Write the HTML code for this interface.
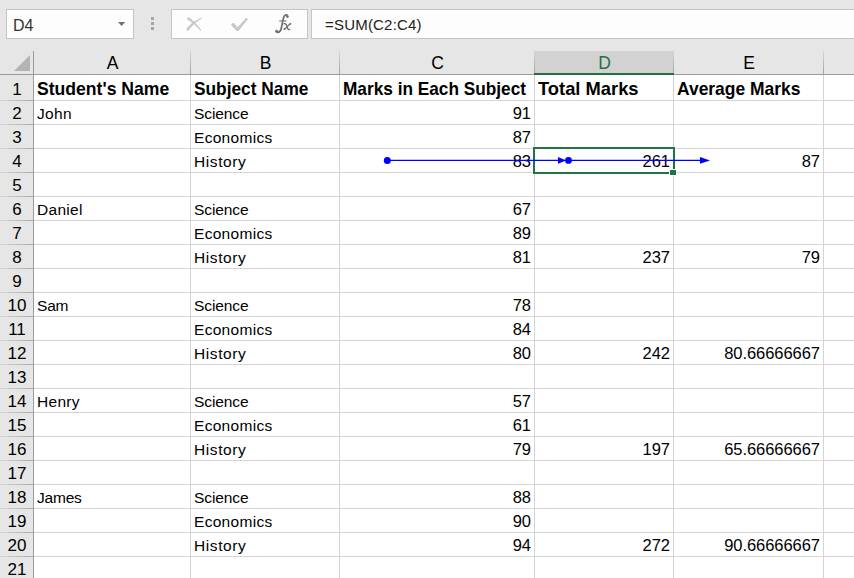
<!DOCTYPE html>
<html><head><meta charset="utf-8"><style>
*{margin:0;padding:0;box-sizing:border-box}
html,body{width:854px;height:578px;overflow:hidden;background:#e6e6e6;font-family:"Liberation Sans",sans-serif}
.abs{position:absolute}
#namebox{position:absolute;left:6px;top:9px;width:128px;height:30px;background:#fdfdfd;border:1px solid #c6c6c6}
#fxbox{position:absolute;left:171px;top:9px;width:137px;height:30px;background:#fdfdfd;border:1px solid #c6c6c6}
#fbox{position:absolute;left:311px;top:9px;width:560px;height:30px;background:#fdfdfd;border:1px solid #c6c6c6}
.ftxt{position:absolute;font-size:15px;line-height:15px;color:#222;white-space:pre;letter-spacing:0.2px}
#sheet{position:absolute;left:0;top:51px;width:854px;height:527px;background:#fff}
#colhdr{position:absolute;left:0;top:51px;width:854px;height:23px;background:#e6e6e6}
#rowhdr{position:absolute;left:0;top:51px;width:33px;height:527px;background:#e6e6e6}
.hl{position:absolute;left:34px;width:820px;height:1px;background:#d4d4d4}
.vl{position:absolute;top:75px;height:503px;width:1px;background:#d4d4d4}
.rh{position:absolute;left:0;width:33px;height:1px;background:linear-gradient(to right,#d6d6d6,#a9a9a9)}
.ch{position:absolute;top:51px;height:23px;width:1px;background:linear-gradient(to bottom,#d6d6d6,#a2a2a2)}
#hline{position:absolute;left:0;top:74px;width:854px;height:1px;background:#9b9b9b}
#vline{position:absolute;left:33px;top:51px;width:1px;height:527px;background:#9b9b9b}
.t{position:absolute;font-size:15.5px;line-height:15.5px;letter-spacing:0.3px;color:#000;white-space:pre}
.t.r{letter-spacing:-0.05px;font-size:16.5px;line-height:16.5px}
.t.b{transform-origin:0 0;letter-spacing:0;font-weight:bold;font-size:18.5px;line-height:18.5px}
.rn{position:absolute;left:0;width:34px;text-align:center;font-size:17px;line-height:17px;color:#000}
.cn{position:absolute;text-align:center;font-size:17.5px;line-height:17.5px;color:#000}
.selhdr{position:absolute;left:534px;top:51px;width:140px;height:24px;background:#d2d2d2;border-bottom:2px solid #217346}
.cn.sel{color:#217346}
</style></head><body>
<div id="namebox"></div>
<div class="ftxt" style="left:13px;top:17.5px;font-size:16px;line-height:16px;color:#333;letter-spacing:0">D4</div>
<svg class="abs" style="left:117px;top:21px" width="10" height="6"><path d="M1 1 L8.2 1 L4.6 5 Z" fill="#707070"/></svg>
<div class="abs" style="left:151px;top:17px;width:3px;height:3px;background:#a6a6a6"></div>
<div class="abs" style="left:151px;top:22px;width:3px;height:3px;background:#a6a6a6"></div>
<div class="abs" style="left:151px;top:27px;width:3px;height:3px;background:#a6a6a6"></div>
<div id="fxbox"></div>
<svg class="abs" style="left:0;top:0" width="320" height="45" fill="#c8c8c8"><path d="M187.85 19.98 L188.43 20.26 L189.04 20.59 L189.67 20.97 L190.34 21.40 L191.03 21.88 L191.75 22.41 L192.49 22.99 L193.25 23.62 L194.04 24.30 L194.85 25.03 L195.68 25.81 L196.54 26.64 L197.42 27.52 L198.32 28.45 L199.24 29.43 L200.18 30.45 L201.02 29.75 L200.15 28.64 L199.29 27.59 L198.45 26.58 L197.64 25.62 L196.84 24.70 L196.06 23.83 L195.29 23.01 L194.55 22.23 L193.82 21.50 L193.11 20.81 L192.42 20.17 L191.74 19.57 L191.07 19.01 L190.42 18.50 L189.78 18.04 L189.15 17.62 Z"/><circle cx="188.5" cy="18.8" r="1.35"/><circle cx="200.6" cy="30.1" r="0.55"/><path d="M188.87 30.12 L189.52 29.22 L190.18 28.35 L190.86 27.51 L191.55 26.69 L192.26 25.91 L192.99 25.15 L193.74 24.42 L194.50 23.71 L195.28 23.04 L196.07 22.39 L196.89 21.77 L197.72 21.18 L198.57 20.62 L199.44 20.09 L200.32 19.58 L201.22 19.10 L200.78 18.10 L199.79 18.50 L198.83 18.94 L197.87 19.40 L196.93 19.91 L196.00 20.44 L195.09 21.01 L194.19 21.60 L193.30 22.24 L192.43 22.90 L191.57 23.60 L190.73 24.33 L189.90 25.10 L189.08 25.89 L188.28 26.72 L187.50 27.58 L186.73 28.48 Z"/><circle cx="187.8" cy="29.3" r="1.35"/><circle cx="201" cy="18.6" r="0.55"/></svg>
<svg class="abs" style="left:0;top:0" width="320" height="45" fill="#c8c8c8"><path d="M231.70 25.70 L231.99 26.02 L232.29 26.34 L232.58 26.66 L232.88 26.98 L233.17 27.30 L233.47 27.61 L233.77 27.92 L234.07 28.23 L234.38 28.54 L234.68 28.85 L234.99 29.16 L235.29 29.46 L235.60 29.76 L235.91 30.06 L236.23 30.36 L236.54 30.66 L238.66 28.54 L238.38 28.24 L238.09 27.93 L237.81 27.62 L237.53 27.31 L237.25 27.00 L236.98 26.69 L236.70 26.38 L236.43 26.07 L236.16 25.75 L235.89 25.43 L235.62 25.12 L235.35 24.80 L235.08 24.47 L234.82 24.15 L234.56 23.83 L234.30 23.50 Z"/><circle cx="233.0" cy="24.6" r="1.7"/><circle cx="237.6" cy="29.6" r="1.5"/><path d="M238.74 30.58 L239.27 29.92 L239.80 29.26 L240.34 28.60 L240.88 27.94 L241.42 27.27 L241.96 26.59 L242.50 25.92 L243.04 25.24 L243.59 24.56 L244.13 23.88 L244.68 23.19 L245.23 22.50 L245.78 21.80 L246.33 21.11 L246.89 20.41 L247.44 19.71 L245.76 18.29 L245.16 18.96 L244.57 19.63 L243.98 20.29 L243.39 20.95 L242.81 21.61 L242.22 22.26 L241.64 22.91 L241.06 23.56 L240.48 24.20 L239.90 24.84 L239.32 25.48 L238.75 26.11 L238.18 26.75 L237.60 27.37 L237.03 28.00 L236.46 28.62 Z"/><circle cx="237.6" cy="29.6" r="1.5"/><circle cx="246.6" cy="19.0" r="1.1"/></svg>
<svg class="abs" style="left:0;top:0" width="320" height="45">
<path d="M287.6 15.6 C286.6 14.2 284.4 14.6 283.6 17.5 L281.2 28.5 C280.6 31.4 279 32.6 276.8 32.2" fill="none" stroke="#6e6e6e" stroke-width="1.7"/>
<circle cx="287.4" cy="16.6" r="1.35" fill="#6e6e6e"/>
<circle cx="276.6" cy="31.3" r="1.5" fill="#6e6e6e"/>
<path d="M279.2 20.9 L286.3 20.9" stroke="#7a7a7a" stroke-width="1.2"/>
<path d="M283.6 23.9 C285.2 23 286.2 24 286.8 26 L287.6 28.6 C288.1 29.8 289.2 29.9 290.2 29.1" fill="none" stroke="#6e6e6e" stroke-width="1.3"/>
<path d="M290.6 23.6 C289.2 24.2 286.5 27.5 284.6 29.3" fill="none" stroke="#6e6e6e" stroke-width="1.3"/>
<circle cx="290.4" cy="23.8" r="0.9" fill="#6e6e6e"/>
<circle cx="284.5" cy="29.0" r="1.0" fill="#6e6e6e"/>
</svg>
<div id="fbox"></div>
<div class="ftxt" style="left:325px;top:17px">=SUM(C2:C4)</div>
<div id="sheet"></div>
<div id="colhdr"></div>
<div id="rowhdr"></div>
<div class="selhdr"></div>
<svg class="abs" style="left:14px;top:55px" width="17" height="17"><path d="M16 0 L16 16 L0 16 Z" fill="#b4b4b4"/></svg>
<div class="hl" style="top:100px"></div><div class="rh" style="top:100px"></div><div class="hl" style="top:124px"></div><div class="rh" style="top:124px"></div><div class="hl" style="top:148px"></div><div class="rh" style="top:148px"></div><div class="hl" style="top:172px"></div><div class="rh" style="top:172px"></div><div class="hl" style="top:196px"></div><div class="rh" style="top:196px"></div><div class="hl" style="top:220px"></div><div class="rh" style="top:220px"></div><div class="hl" style="top:244px"></div><div class="rh" style="top:244px"></div><div class="hl" style="top:268px"></div><div class="rh" style="top:268px"></div><div class="hl" style="top:292px"></div><div class="rh" style="top:292px"></div><div class="hl" style="top:316px"></div><div class="rh" style="top:316px"></div><div class="hl" style="top:340px"></div><div class="rh" style="top:340px"></div><div class="hl" style="top:364px"></div><div class="rh" style="top:364px"></div><div class="hl" style="top:388px"></div><div class="rh" style="top:388px"></div><div class="hl" style="top:412px"></div><div class="rh" style="top:412px"></div><div class="hl" style="top:436px"></div><div class="rh" style="top:436px"></div><div class="hl" style="top:460px"></div><div class="rh" style="top:460px"></div><div class="hl" style="top:484px"></div><div class="rh" style="top:484px"></div><div class="hl" style="top:508px"></div><div class="rh" style="top:508px"></div><div class="hl" style="top:532px"></div><div class="rh" style="top:532px"></div><div class="hl" style="top:556px"></div><div class="rh" style="top:556px"></div><div class="vl" style="left:190px"></div><div class="ch" style="left:190px"></div><div class="vl" style="left:339px"></div><div class="ch" style="left:339px"></div><div class="vl" style="left:534px"></div><div class="ch" style="left:534px"></div><div class="vl" style="left:673px"></div><div class="ch" style="left:673px"></div><div class="vl" style="left:823px"></div><div class="ch" style="left:823px"></div>
<div id="hline"></div>
<div id="vline"></div>
<div class="abs" style="left:534px;top:73px;width:140px;height:2px;background:#217346"></div>
<div class="cn" style="left:34px;width:157px;top:55.19px">A</div><div class="cn" style="left:191px;width:149px;top:55.19px">B</div><div class="cn" style="left:340px;width:195px;top:55.19px">C</div><div class="cn sel" style="left:535px;width:139px;top:55.19px">D</div><div class="cn" style="left:674px;width:150px;top:55.19px">E</div>
<div class="rn" style="top:81.11px">1</div><div class="rn" style="top:105.41px">2</div><div class="rn" style="top:129.41px">3</div><div class="rn" style="top:153.41px">4</div><div class="rn" style="top:177.41px">5</div><div class="rn" style="top:201.41px">6</div><div class="rn" style="top:225.41px">7</div><div class="rn" style="top:249.41px">8</div><div class="rn" style="top:273.41px">9</div><div class="rn" style="top:297.41px">10</div><div class="rn" style="top:321.41px">11</div><div class="rn" style="top:345.41px">12</div><div class="rn" style="top:369.41px">13</div><div class="rn" style="top:393.41px">14</div><div class="rn" style="top:417.41px">15</div><div class="rn" style="top:441.41px">16</div><div class="rn" style="top:465.41px">17</div><div class="rn" style="top:489.41px">18</div><div class="rn" style="top:513.41px">19</div><div class="rn" style="top:537.41px">20</div><div class="rn" style="top:561.41px">21</div>
<div class="t b" style="left:37.00px;top:80.34px;transform:scaleX(0.951)">Student's Name</div><div class="t b" style="left:194.30px;top:80.34px;transform:scaleX(0.935)">Subject Name</div><div class="t b" style="left:342.50px;top:80.34px;transform:scaleX(0.932)">Marks in Each Subject</div><div class="t b" style="left:537.70px;top:80.34px;transform:scaleX(0.991)">Total Marks</div><div class="t b" style="left:677.20px;top:80.34px;transform:scaleX(0.942)">Average Marks</div><div class="t" style="left:37px;top:105.88px">John</div><div class="t" style="left:194px;top:105.88px;letter-spacing:-0.08px">Science</div><div class="t r" style="right:323px;top:105.03px">91</div><div class="t" style="left:194px;top:129.88px">Economics</div><div class="t r" style="right:323px;top:129.03px">87</div><div class="t" style="left:194px;top:153.88px;letter-spacing:0.6px">History</div><div class="t r" style="right:323px;top:153.03px">83</div><div class="t r" style="right:184px;top:153.03px">261</div><div class="t r" style="right:34px;top:153.03px">87</div><div class="t" style="left:37px;top:201.88px">Daniel</div><div class="t" style="left:194px;top:201.88px;letter-spacing:-0.08px">Science</div><div class="t r" style="right:323px;top:201.03px">67</div><div class="t" style="left:194px;top:225.88px">Economics</div><div class="t r" style="right:323px;top:225.03px">89</div><div class="t" style="left:194px;top:249.88px;letter-spacing:0.6px">History</div><div class="t r" style="right:323px;top:249.03px">81</div><div class="t r" style="right:184px;top:249.03px">237</div><div class="t r" style="right:34px;top:249.03px">79</div><div class="t" style="left:37px;top:297.88px;letter-spacing:-0.2px">Sam</div><div class="t" style="left:194px;top:297.88px;letter-spacing:-0.08px">Science</div><div class="t r" style="right:323px;top:297.03px">78</div><div class="t" style="left:194px;top:321.88px">Economics</div><div class="t r" style="right:323px;top:321.03px">84</div><div class="t" style="left:194px;top:345.88px;letter-spacing:0.6px">History</div><div class="t r" style="right:323px;top:345.03px">80</div><div class="t r" style="right:184px;top:345.03px">242</div><div class="t r" style="right:34px;top:345.03px">80.66666667</div><div class="t" style="left:37px;top:393.88px">Henry</div><div class="t" style="left:194px;top:393.88px;letter-spacing:-0.08px">Science</div><div class="t r" style="right:323px;top:393.03px">57</div><div class="t" style="left:194px;top:417.88px">Economics</div><div class="t r" style="right:323px;top:417.03px">61</div><div class="t" style="left:194px;top:441.88px;letter-spacing:0.6px">History</div><div class="t r" style="right:323px;top:441.03px">79</div><div class="t r" style="right:184px;top:441.03px">197</div><div class="t r" style="right:34px;top:441.03px">65.66666667</div><div class="t" style="left:37px;top:489.88px;letter-spacing:-0.2px">James</div><div class="t" style="left:194px;top:489.88px;letter-spacing:-0.08px">Science</div><div class="t r" style="right:323px;top:489.03px">88</div><div class="t" style="left:194px;top:513.88px">Economics</div><div class="t r" style="right:323px;top:513.03px">90</div><div class="t" style="left:194px;top:537.88px;letter-spacing:0.6px">History</div><div class="t r" style="right:323px;top:537.03px">94</div><div class="t r" style="right:184px;top:537.03px">272</div><div class="t r" style="right:34px;top:537.03px">90.66666667</div>
<svg class="abs" style="left:0;top:0" width="854" height="578">
<rect x="534" y="148" width="140" height="25" fill="none" stroke="#217346" stroke-width="2"/>
<rect x="669" y="169" width="8" height="7" fill="#fff"/>
<rect x="670" y="170" width="6" height="5" fill="#217346"/>
<line x1="387" y1="160.35" x2="702" y2="160.35" stroke="#0000ff" stroke-width="1.3"/>
<circle cx="387.3" cy="160.4" r="3.5" fill="#0000ff"/>
<circle cx="568.5" cy="160.4" r="3.4" fill="#0000ff"/>
<path d="M558 157 L566 160.4 L558 163.8 Z" fill="#0000ff"/>
<path d="M700 157 L710 160.4 L700 163.8 Z" fill="#0000ff"/>
</svg>
</body></html>
